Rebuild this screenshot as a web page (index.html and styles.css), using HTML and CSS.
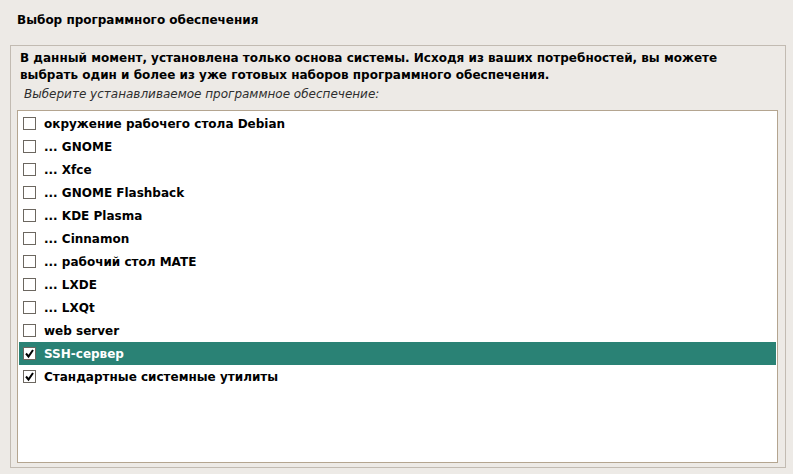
FILE: index.html
```html
<!DOCTYPE html>
<html lang="ru">
<head>
<meta charset="utf-8">
<title>Выбор программного обеспечения</title>
<link rel="stylesheet" href="styles.css">
</head>
<body>
<div class="page">
  <h1 class="title">Выбор программного обеспечения</h1>
  <div class="frame">
    <p class="desc">В данный момент, установлена только основа системы. Исходя из ваших потребностей, вы можете выбрать один и более из уже готовых наборов программного обеспечения.</p>
    <p class="prompt">Выберите устанавливаемое программное обеспечение:</p>
    <ul class="list">
      <li class="row"><span class="check"></span><span class="label">окружение рабочего стола Debian</span></li>
      <li class="row"><span class="check"></span><span class="label">... GNOME</span></li>
      <li class="row"><span class="check"></span><span class="label">... Xfce</span></li>
      <li class="row"><span class="check"></span><span class="label">... GNOME Flashback</span></li>
      <li class="row"><span class="check"></span><span class="label">... KDE Plasma</span></li>
      <li class="row"><span class="check"></span><span class="label">... Cinnamon</span></li>
      <li class="row"><span class="check"></span><span class="label">... рабочий стол MATE</span></li>
      <li class="row"><span class="check"></span><span class="label">... LXDE</span></li>
      <li class="row"><span class="check"></span><span class="label">... LXQt</span></li>
      <li class="row"><span class="check"></span><span class="label">web server</span></li>
      <li class="row selected"><span class="check checked"><svg viewBox="0 0 13 13" width="13" height="13"><path d="M3 6.5 L5.5 9.5 L10 3" fill="none" stroke="#000" stroke-width="2"/></svg></span><span class="label">SSH-сервер</span></li>
      <li class="row"><span class="check checked"><svg viewBox="0 0 13 13" width="13" height="13"><path d="M3 6.5 L5.5 9.5 L10 3" fill="none" stroke="#000" stroke-width="2"/></svg></span><span class="label">Стандартные системные утилиты</span></li>
    </ul>
  </div>
</div>
</body>
</html>
```

FILE: styles.css
```css
html, body {
  margin: 0;
  padding: 0;
  background: #edeae6;
  width: 793px;
  height: 474px;
  overflow: hidden;
}
body {
  font-family: "DejaVu Sans", sans-serif;
  font-size: 12px;
  color: #000;
}
.page {
  display: flex;
  flex-direction: column;
  height: 474px;
}
.title {
  margin: 0;
  padding: 12px 0 0 17px;
  height: 45px;
  box-sizing: border-box;
  font-size: 12px;
  font-weight: bold;
  line-height: 16px;
}
.frame {
  margin: 0 7px 6px 10px;
  border: 1px solid #c2bbb2;
  flex: 1;
  display: flex;
  flex-direction: column;
  min-height: 0;
}
.desc {
  margin: 0;
  padding: 4px 0 0 9px;
  font-weight: bold;
  line-height: 17px;
  width: 720px;
}
.prompt {
  margin: 0;
  padding: 2px 0 0 13px;
  font-style: italic;
  line-height: 17px;
  color: #2e2e2e;
}
.list {
  list-style: none;
  margin: 7px 7px 4px 6px;
  padding: 1px;
  background: #fff;
  border: 1px solid #b4a590;
  flex: 1;
}
.row {
  display: flex;
  align-items: center;
  height: 23px;
  padding-left: 4px;
}
.row.selected {
  background: #2a8275;
  color: #fff;
}
.check {
  width: 11px;
  height: 11px;
  border: 1px solid #6c6760;
  background: #fff;
  margin-right: 8px;
  display: flex;
  position: relative;
}
.check svg {
  position: absolute;
  left: -1px;
  top: -1px;
}
.label {
  font-weight: bold;
  line-height: 16px;
}
```
